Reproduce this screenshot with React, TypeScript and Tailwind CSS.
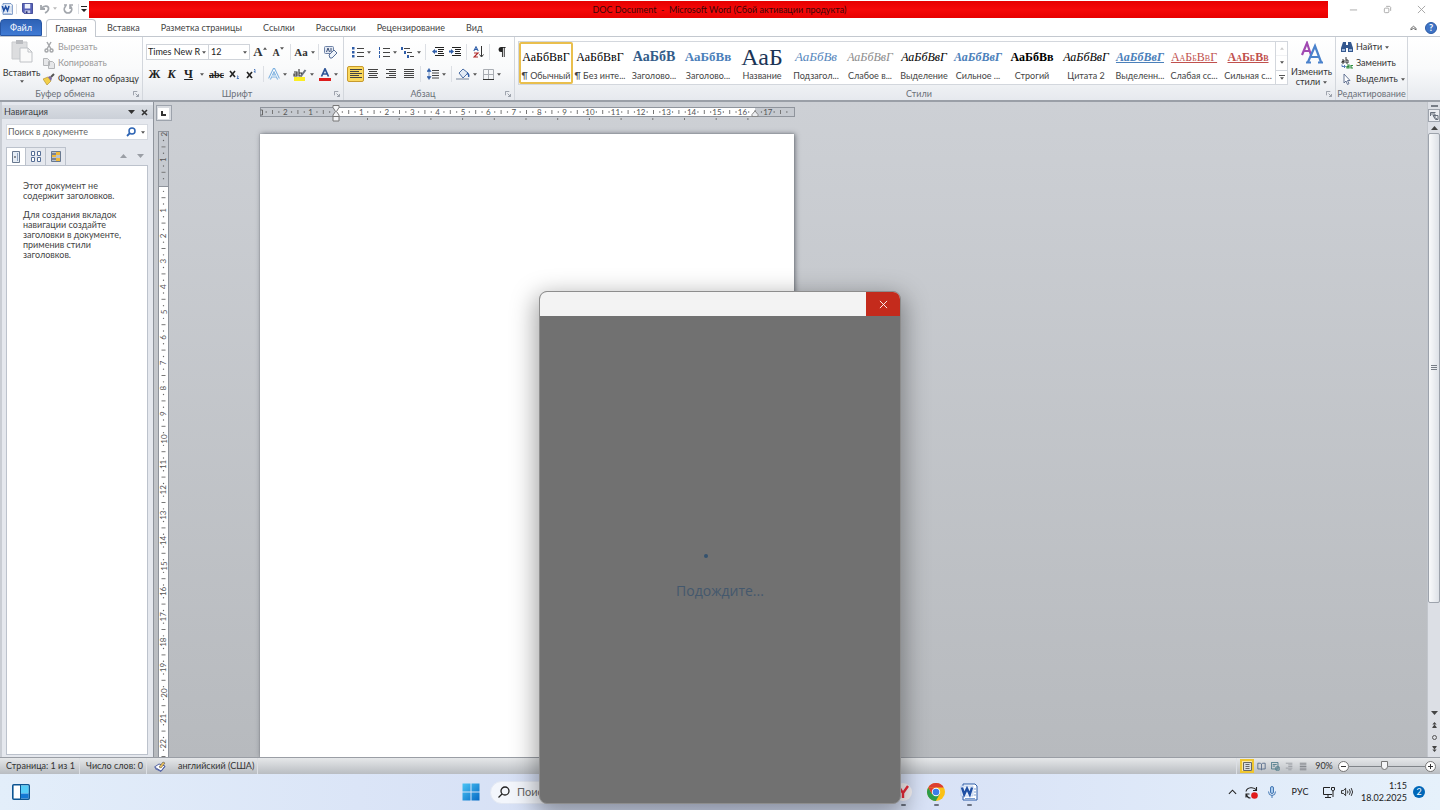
import React from "react";
import { clsx } from "clsx";

const UNIT = 25.4; // one centimetre on the rulers at 90% zoom

const Caret = ({ className = "" }: { className?: string }) => (
  <svg viewBox="0 0 5 3" className={clsx("w-[4px] h-[3px] shrink-0", className)} aria-hidden="true">
    <path d="M0 0h5L2.5 3z" fill="#555" />
  </svg>
);

const Divider = ({ className = "" }: { className?: string }) => (
  <span className={clsx("w-px h-4 bg-[#dcdfe4] shrink-0", className)} />
);

const Launcher = () => (
  <button type="button" aria-label="Параметры" className="w-3 h-3 flex items-center justify-center shrink-0">
    <svg viewBox="0 0 7 7" className="w-[6px] h-[6px]" fill="none" stroke="#8a919b">
      <path d="M.5 5V.5H5M3 3l3 3M6.5 3.5v3h-3" />
    </svg>
  </button>
);

type ToolProps = {
  label: string;
  className?: string;
  caret?: boolean;
  children: React.ReactNode;
};

const Tool = ({ label, className = "", caret, children }: ToolProps) => (
  <button
    type="button"
    title={label}
    aria-label={label}
    className={clsx("h-4 flex items-center justify-center gap-[3px] shrink-0", className)}
  >
    {children}
    {caret && <Caret />}
  </button>
);

type GroupProps = {
  title: string;
  className?: string;
  launcher?: boolean;
  children: React.ReactNode;
};

const Group = ({ title, className = "", launcher = true, children }: GroupProps) => (
  <section className={clsx("flex flex-col border-r border-[#d3d7dd] shrink-0", className)}>
    <div className="flex-1 min-h-0">{children}</div>
    <div className="h-[13px] flex items-center">
      <h2 className="flex-1 text-center text-[#6a7078]">{title}</h2>
      {launcher && <Launcher />}
    </div>
  </section>
);

const WordIcon = ({ className }: { className: string }) => (
  <svg viewBox="0 0 18 18" className={className} aria-hidden="true">
    <path d="M3 1h12l2 2v14H3z" fill="#fff" stroke="#2b5aa5" />
    <path d="M14 6h2M14 9h2M14 12h2M5 15.500h10" stroke="#7c9ed2" />
    <path d="M1 3h12v10H1z" fill="#e8f0fb" stroke="#9fbbe4" strokeWidth=".6" />
    <path d="M2 4.500l2.200 7L7 5.500l2.800 6 2.200-7" fill="none" stroke="#1f4fa3" strokeWidth="2.400" />
  </svg>
);

const Lines = ({ rows }: { rows: number[][] }) => (
  <svg viewBox="0 0 12 10" className="w-3 h-[10px]" stroke="#444" aria-hidden="true">
    {rows.map(([a, b], i) => (
      <path key={i} d={`M${a} ${i * 2 + 0.5}H${b}`} />
    ))}
  </svg>
);

const TitleBar = () => (
  <header className="h-[19px] flex items-start bg-white">
    <div className="w-[89px] h-[17px] flex items-center pl-px shrink-0">
      <WordIcon className="w-3 h-3" />
      <Divider className="ml-[3px] h-[10px]" />
      <Tool label="Сохранить" className="w-[21px]">
        <svg viewBox="0 0 12 12" className="w-[11px] h-[11px]">
          <path d="M.5.5h11v11h-9l-2-2z" fill="#5661b8" stroke="#3c4594" />
          <path d="M3 1h6v5H3z" fill="#eef1fb" />
          <path d="M3 8h6v3H3z" fill="#c8cde8" />
          <path d="M4 9h2v2H4z" fill="#2d3470" />
        </svg>
      </Tool>
      <Tool label="Отменить" className="w-[20px]">
        <svg viewBox="0 0 10 10" className="w-[10px] h-[10px]" fill="none" stroke="#a3a7ad" strokeWidth="1.800">
          <path d="M1 1v4h4M1.500 4.500C4 1 9 1.500 8.500 5 8.300 7 7 8 5 9" />
        </svg>
        <Caret className="opacity-40" />
      </Tool>
      <Tool label="Повторить" className="w-[20px]">
        <svg viewBox="0 0 10 10" className="w-[10px] h-[10px]" fill="none" stroke="#a3a7ad" strokeWidth="1.600">
          <path d="M3 2C0 4 1 9 5 9s5-5 2-7M4 1h-3M7 5V1h3" />
        </svg>
      </Tool>
      <Divider className="h-[10px]" />
      <Tool label="Настройка панели" className="w-[10px]">
        <svg viewBox="0 0 6 6" className="w-[6px] h-[6px]">
          <path d="M0 0h6v1H0zM0 3h6L3 6z" fill="#222" />
        </svg>
      </Tool>
    </div>
    <h1 className="flex-1 h-[17px] mt-px pl-[22px] bg-linear-to-b from-[#e60000] via-[#f60808] to-[#e60000] text-center leading-[17px] text-[#3b0606] whitespace-pre">
      DOC Document  -  Microsoft Word (Сбой активации продукта)
    </h1>
    <div className="w-28 h-[19px] flex items-center pl-2 shrink-0">
      <Tool label="Свернуть" className="w-[34px]">
        <svg viewBox="0 0 10 10" className="w-[9px] h-[9px]" stroke="#a5a5a5" fill="none">
          <path d="M1 5.500h8" />
        </svg>
      </Tool>
      <Tool label="Восстановить" className="w-[34px]">
        <svg viewBox="0 0 10 10" className="w-[9px] h-[9px]" stroke="#a5a5a5" fill="none">
          <rect x="1.500" y="3.500" width="5" height="5" rx="1" />
          <path d="M3.500 1.500h4l1 1v4" />
        </svg>
      </Tool>
      <Tool label="Закрыть" className="w-[34px]">
        <svg viewBox="0 0 10 10" className="w-[9px] h-[9px]" stroke="#a0a0a0" fill="none">
          <path d="M1 1l8 8M9 1L1 9" />
        </svg>
      </Tool>
    </div>
  </header>
);

const tabs = ["Вставка", "Разметка страницы", "Ссылки", "Рассылки", "Рецензирование", "Вид"];

const Tabs = () => (
  <nav className="h-[18px] flex items-stretch bg-white border-b border-[#c3c8cf] shrink-0">
    <button type="button" className="w-[42px] bg-linear-to-b from-[#2e62b5] to-[#3f7ad4] border border-[#2756a5] rounded-t-sm text-white">
      Файл
    </button>
    <button type="button" className="w-[50px] ml-1 -mb-px bg-white border border-b-0 border-[#c3c8cf] rounded-t-sm text-[#444]">
      Главная
    </button>
    {tabs.map((tab) => (
      <button key={tab} type="button" className="ml-px px-[10px] text-[#444]">
        {tab}
      </button>
    ))}
    <div className="ml-auto flex items-center gap-2 pr-[3px]">
      <Tool label="Свернуть ленту">
        <svg viewBox="0 0 8 6" className="w-[7px] h-[6px]" fill="#fff" stroke="#555">
          <path d="M1 5V3.500L4 1l3 2.500V5L4 3.500z" />
        </svg>
      </Tool>
      <button
        type="button"
        aria-label="Справка"
        className="w-3 h-3 rounded-full bg-[#3f74c6] border border-[#2c5ba5] text-white font-bold leading-[10px]"
      >
        ?
      </button>
    </div>
  </nav>
);

const Clipboard = () => (
  <Group title="Буфер обмена" className="w-[143px]">
    <div className="flex pt-[2px]">
      <button type="button" className="w-[43px] flex flex-col items-center text-[#333]">
        <svg viewBox="0 0 22 24" className="w-[22px] h-6" aria-hidden="true">
          <path d="M1 3h15v17H1z" fill="#dcdddf" stroke="#c9cbce" />
          <path d="M5 1h7v4H5z" fill="#b9bbbf" />
          <path d="M9 9h8l4 4v10H9z" fill="#fafafa" stroke="#bfc2c6" />
          <path d="M17 9v4h4" fill="none" stroke="#bfc2c6" />
        </svg>
        <span className="mt-1 leading-3">Вставить</span>
        <Caret className="mt-px" />
      </button>
      <div className="flex flex-col items-start text-[#9a9a9a]">
        <button type="button" className="h-4 flex items-center gap-[3px]">
          <svg viewBox="0 0 12 12" className="w-3 h-3" fill="none" stroke="#a6a8ab" strokeWidth="1.500">
            <path d="M4 1l4 7M8 1L4 8" />
            <circle cx="3.500" cy="9.500" r="1.500" />
            <circle cx="8.500" cy="9.500" r="1.500" />
          </svg>
          Вырезать
        </button>
        <button type="button" className="h-4 flex items-center gap-[3px]">
          <svg viewBox="0 0 12 12" className="w-3 h-3" fill="#e6e7e9" stroke="#b4b6b9">
            <path d="M.5 1.500h4l2 2v5h-6zM5.500 4.500h4l2 2v5h-6z" />
          </svg>
          Копировать
        </button>
        <button type="button" className="h-4 flex items-center gap-[3px] text-[#333]">
          <svg viewBox="0 0 12 12" className="w-3 h-3 shrink-0">
            <path d="M0 6l5-2 3 4-4 4z" fill="#f2cf4a" stroke="#b08c22" strokeWidth=".6" />
            <path d="M5 4l2-1 2 2-1 3z" fill="#7b6a9c" />
            <path d="M8 4l3-3" stroke="#555" strokeWidth="2" />
          </svg>
          Формат по образцу
        </button>
      </div>
    </div>
  </Group>
);

const FontGroup = () => (
  <Group title="Шрифт" className="w-[201px]">
    <div className="flex items-center h-4 mt-[7px] pl-[3px]">
      <div className="relative w-[63px]">
        <select aria-label="Шрифт" className="block w-full h-4 pl-px pr-2 appearance-none bg-white border border-[#d0d4da] text-[#222]">
          <option>Times New Roman</option>
        </select>
        <Caret className="absolute right-[3px] top-[7px]" />
      </div>
      <div className="relative w-[42px] -ml-px">
        <select aria-label="Размер шрифта" className="block w-full h-4 pl-[2px] appearance-none bg-white border border-[#d0d4da] text-[#222]">
          <option>12</option>
        </select>
        <Caret className="absolute right-[3px] top-[7px]" />
      </div>
      <Tool label="Увеличить размер" className="w-[20px]">
        <span className="font-['Liberation_Serif'] font-bold text-[13px] text-[#333]">A</span>
        <Caret className="-ml-[3px] mb-2 rotate-180" />
      </Tool>
      <Tool label="Уменьшить размер" className="w-[16px]">
        <span className="font-['Liberation_Serif'] font-bold text-[10px] text-[#333]">A</span>
        <Caret className="-ml-[3px] mb-2" />
      </Tool>
      <Divider className="ml-1" />
      <Tool label="Регистр" className="w-[27px]" caret>
        <span className="font-['Liberation_Serif'] font-bold text-[11px] text-[#333]">Aa</span>
      </Tool>
      <Divider />
      <Tool label="Очистить формат" className="w-[24px]">
        <svg viewBox="0 0 14 13" className="w-[14px] h-[13px]">
          <rect x=".5" y=".5" width="9" height="7" rx="1" fill="#e3e9f3" stroke="#7084a8" />
          <path d="M2.500 6l1.500-4 1.500 4M7 2v4" fill="none" stroke="#3c5078" />
          <path d="M5 9l5-5 3 3-5 5H6z" fill="#eef3fa" stroke="#587099" />
        </svg>
      </Tool>
    </div>
    <div className="flex items-center h-4 mt-[6px] pl-[3px] font-['Liberation_Serif'] font-bold text-[12px] text-[#222]">
      <Tool label="Полужирный" className="w-[17px]">Ж</Tool>
      <Tool label="Курсив" className="w-[17px] italic">К</Tool>
      <Tool label="Подчёркнутый" className="w-[28px]" caret>
        <span className="underline mr-1">Ч</span>
      </Tool>
      <Tool label="Зачёркнутый" className="w-[17px] text-[10px] line-through">abc</Tool>
      <Tool label="Подстрочный" className="w-[17px]">
        <svg viewBox="0 0 10 10" className="w-[10px] h-[10px]" fill="none" stroke="#222">
          <path d="M1 2l5 6M6 2L1 8" strokeWidth="1.600" />
          <path d="M8 7h1v1l-1 1.500h2" stroke="#2d5fae" strokeWidth=".8" />
        </svg>
      </Tool>
      <Tool label="Надстрочный" className="w-[17px]">
        <svg viewBox="0 0 10 10" className="w-[10px] h-[10px]" fill="none" stroke="#222">
          <path d="M1 3l5 6M6 3L1 9" strokeWidth="1.600" />
          <path d="M8 .5h1v1L8 3h2" stroke="#2d5fae" strokeWidth=".8" />
        </svg>
      </Tool>
      <Divider className="ml-1" />
      <Tool label="Эффекты текста" className="w-[27px]" caret>
        <svg viewBox="0 0 12 12" className="w-3 h-3" fill="none">
          <path d="M1.500 11L6 1.500 10.500 11M3.500 8h5" stroke="#7fb2e0" strokeWidth="3" />
          <path d="M1.500 11L6 1.500 10.500 11M3.500 8h5" stroke="#fff" strokeWidth="1" />
        </svg>
      </Tool>
      <Tool label="Цвет выделения" className="w-[25px]" caret>
        <svg viewBox="0 0 14 13" className="w-[14px] h-[13px]">
          <path d="M1 9h11v4H1z" fill="#fbee23" />
          <path d="M1 4h3v4H1V6h3M6 1v7h2.500V5H6" fill="none" stroke="#333" strokeWidth="1.100" />
          <path d="M8 8l4.500-6" stroke="#6a727e" strokeWidth="2" />
        </svg>
      </Tool>
      <Tool label="Цвет текста" className="w-[25px]" caret>
        <svg viewBox="0 0 12 13" className="w-3 h-[13px]">
          <path d="M0 10h12v3H0z" fill="#dd1c1c" />
          <path d="M2.500 8.500L6 .8l3.500 7.700M4 6h4" fill="none" stroke="#2f5597" strokeWidth="1.700" />
        </svg>
      </Tool>
    </div>
  </Group>
);

const ListIcon = ({ numbered }: { numbered?: boolean }) => (
  <svg viewBox="0 0 12 11" className="w-3 h-[11px]" aria-hidden="true">
    <path d="M5 1.500h7M5 5.500h7M5 9.500h7" stroke="#444" />
    <path
      d={numbered ? "M1 0h1v3H1zM1 4h1v3H1zM1 8h1v3H1z" : "M0 0h2.500v2.500H0zM0 4h2.500v2.500H0zM0 8h2.500v2.500H0z"}
      fill="#2e5da8"
    />
  </svg>
);

const ParagraphGroup = () => (
  <Group title="Абзац" className="w-[171px]">
    <div className="flex items-center h-4 mt-[7px] pl-[3px]">
      <Tool label="Маркеры" className="w-[28px]" caret>
        <ListIcon />
      </Tool>
      <Tool label="Нумерация" className="w-[24px]" caret>
        <ListIcon numbered />
      </Tool>
      <Tool label="Многоуровневый список" className="w-6" caret>
        <svg viewBox="0 0 13 11" className="w-[13px] h-[11px]">
          <path d="M3 1.500h6M6 5.500h5M9 9.500h4" stroke="#444" />
          <path d="M0 0h2v3H0zM3 4h2v3H3zM6 8h2v3H6z" fill="#2e5da8" />
        </svg>
      </Tool>
      <Divider className="ml-[2px]" />
      <Tool label="Уменьшить отступ" className="w-5 pl-1">
        <svg viewBox="0 0 12 11" className="w-3 h-[11px]">
          <path d="M3 .5h9M6 2.500h6M6 4.500h5M6 6.500h6M3 8.500h9" stroke="#222" />
          <path d="M0 4.500L3 2v1.500h2v2H3V7z" fill="#2e5da8" />
        </svg>
      </Tool>
      <Tool label="Увеличить отступ" className="w-[18px]">
        <svg viewBox="0 0 12 11" className="w-3 h-[11px]">
          <path d="M3 .5h9M6 2.500h6M6 4.500h5M6 6.500h6M3 8.500h9" stroke="#222" />
          <path d="M5 4.500L2 2v1.500H0v2h2V7z" fill="#2e5da8" />
        </svg>
      </Tool>
      <Divider className="ml-[2px]" />
      <Tool label="Сортировка" className="w-[22px]">
        <svg viewBox="0 0 11 12" className="w-[11px] h-3" fill="none">
          <path d="M.8 5L3 .8 5.200 5M1.600 3.500h3" stroke="#2e5da8" strokeWidth="1.100" />
          <path d="M1 7h4l-4 4h4" stroke="#b02a2a" strokeWidth="1.200" />
          <path d="M8.500 0v10.500M6.500 8.500l2 2.500 2-2.500" stroke="#333" />
        </svg>
      </Tool>
      <Divider />
      <Tool label="Непечатаемые знаки" className="w-6">
        <svg viewBox="0 0 8 11" className="w-2 h-[10px]">
          <path d="M4.500 0v11M6.500 0v11M3 .5h5" stroke="#222" />
          <path d="M4.500 0H3a2.500 2.500 0 000 5.500h1.500z" fill="#222" />
        </svg>
      </Tool>
    </div>
    <div className="flex items-center h-4 mt-[6px] pl-[3px]">
      <Tool label="По левому краю" className="w-[17px] bg-[#fbd95f] border border-[#c79a2d] rounded-xs">
        <Lines rows={[[0, 12], [0, 9], [0, 12], [0, 9], [0, 12]]} />
      </Tool>
      <Tool label="По центру" className="w-[18px]">
        <Lines rows={[[1, 11], [2, 10], [1, 11], [2, 10], [1, 11]]} />
      </Tool>
      <Tool label="По правому краю" className="w-[18px]">
        <Lines rows={[[1, 11], [4, 11], [1, 11], [4, 11], [1, 11]]} />
      </Tool>
      <Tool label="По ширине" className="w-[18px]">
        <Lines rows={[[1, 11], [1, 11], [1, 11], [1, 11], [1, 11]]} />
      </Tool>
      <Divider className="ml-[2px]" />
      <Tool label="Интервал" className="w-[30px]" caret>
        <svg viewBox="0 0 12 12" className="w-3 h-3">
          <path d="M5 2.500h7M5 5h7M5 7.500h7M5 10h7" stroke="#444" />
          <path d="M2 3v6M0 3.500L2 .5l2 3zM0 8.500l2 3 2-3z" stroke="#2e5da8" strokeWidth=".6" fill="#2e5da8" />
        </svg>
      </Tool>
      <Divider />
      <Tool label="Заливка" className="w-[29px]" caret>
        <svg viewBox="0 0 14 12" className="w-[14px] h-3" fill="none">
          <path d="M3 5l4-4 5 4-5 5z" fill="#e3ebf5" stroke="#4d6fa5" />
          <path d="M11 5c2 1 2 3 1.500 4" stroke="#2e5da8" strokeWidth="1.500" />
          <path d="M0 11h13" stroke="#b4bcc8" strokeWidth="2" />
        </svg>
      </Tool>
      <Tool label="Границы" className="w-[22px]" caret>
        <svg viewBox="0 0 11 11" className="w-[11px] h-[11px]" fill="none">
          <path d="M.5 10V.5h10V10M5.500 1v9M1 5.500h9" stroke="#a9adb3" />
          <path d="M0 10.500h11" stroke="#333" />
        </svg>
      </Tool>
    </div>
  </Group>
);

const styles = [
  { name: "¶ Обычный", text: "АаБбВвГ", look: "text-[12px] text-black" },
  { name: "¶ Без инте...", text: "АаБбВвГ", look: "text-[12px] text-black" },
  { name: "Заголово...", text: "АаБбВ", look: "text-[14px] font-bold text-[#335c89]" },
  { name: "Заголово...", text: "АаБбВв", look: "text-[13px] font-bold text-[#4b80ba]" },
  { name: "Название", text: "АаБ", look: "text-[24px] text-[#1c3556]" },
  { name: "Подзагол...", text: "АаБбВв", look: "text-[13px] italic text-[#5687bd]" },
  { name: "Слабое в...", text: "АаБбВвГ", look: "text-[12px] italic text-[#8c8c8c]" },
  { name: "Выделение", text: "АаБбВвГ", look: "text-[12px] italic text-black" },
  { name: "Сильное ...", text: "АаБбВвГ", look: "text-[12px] font-bold italic text-[#4b80ba]" },
  { name: "Строгий", text: "АаБбВв", look: "text-[12px] font-bold text-black" },
  { name: "Цитата 2", text: "АаБбВвГ", look: "text-[12px] italic text-black" },
  { name: "Выделенн...", text: "АаБбВвГ", look: "text-[12px] font-bold italic underline text-[#4b80ba]" },
  { name: "Слабая сс...", text: "АаБбВвГ", look: "text-[12px] [font-variant:small-caps] underline text-[#c0504d]" },
  { name: "Сильная с...", text: "АаБбВв", look: "text-[12px] [font-variant:small-caps] font-bold underline text-[#c0504d]" },
];

const StylesGroup = () => (
  <Group title="Стили" className="w-[821px]">
    <div className="flex pt-1 pl-[3px]">
      <div className="flex h-11 bg-white border border-[#d3d7dd]">
        {styles.map((style, i) => (
          <button
            key={i}
            type="button"
            className={clsx(
              "w-[54px] h-[42px] flex flex-col items-center",
              i === 0 ? "border-2 border-[#e9bf4d] rounded-xs" : "p-[2px]"
            )}
          >
            <span className={clsx("h-[26px] flex items-center justify-center font-['Liberation_Serif'] leading-[26px]", style.look)}>
              {style.text}
            </span>
            <span className="leading-[11px] text-[#444]">{style.name}</span>
          </button>
        ))}
        <div className="w-[12px] flex flex-col border-l border-[#d3d7dd] divide-y divide-[#d3d7dd]">
          <button type="button" aria-label="Вверх" className="flex-1 flex items-center justify-center opacity-30">
            <Caret className="rotate-180" />
          </button>
          <button type="button" aria-label="Вниз" className="flex-1 flex items-center justify-center">
            <Caret />
          </button>
          <button type="button" aria-label="Дополнительно" className="flex-1 flex flex-col items-center justify-center gap-px">
            <span className="w-[6px] h-px bg-[#555]" />
            <Caret />
          </button>
        </div>
      </div>
      <button type="button" className="flex-1 flex flex-col items-center text-[#333] leading-[10px]">
        <svg viewBox="0 0 24 24" className="w-6 h-6 mb-[2px]" fill="none" aria-hidden="true">
          <path d="M2 14L7 2l4 12M4 10h6" stroke="#a149b2" strokeWidth="2.200" />
          <path d="M8 21l7-16 6 16M11 16h8M6 21.500h5M18 21.500h5" stroke="#4a82cc" strokeWidth="2.200" />
        </svg>
        <span>Изменить</span>
        <span className="flex items-center gap-[3px]">
          стили <Caret />
        </span>
      </button>
    </div>
  </Group>
);

const EditingGroup = () => (
  <Group title="Редактирование" className="w-[72px]" launcher={false}>
    <div className="flex flex-col items-start pt-[2px] pl-[5px] text-[#333]">
      <button type="button" className="h-4 flex items-center gap-[3px]">
        <svg viewBox="0 0 12 12" className="w-3 h-3">
          <path d="M2 1h3v3h2V1h3l2 6v4H7V7H5v4H0V7z" fill="#34588f" />
          <path d="M1 8h3v2H1zM8 8h3v2H8z" fill="#9cb6da" />
        </svg>
        Найти <Caret />
      </button>
      <button type="button" className="h-4 flex items-center gap-[3px]">
        <svg viewBox="0 0 12 12" className="w-3 h-3" fill="none">
          <path d="M1 3h2v3H1V4.500h2M5 0v6h2V3H5" stroke="#333" />
          <path d="M1 7.500v2h3M3 8l1.500 1.500L3 11" stroke="#2e5da8" strokeWidth=".8" />
          <path d="M6 8h2v3H6V9.500h2M12 8.500h-2V11h2" stroke="#2c8c3c" strokeWidth="1.200" />
        </svg>
        Заменить
      </button>
      <button type="button" className="h-4 flex items-center gap-[3px]">
        <svg viewBox="0 0 12 12" className="w-3 h-3">
          <path d="M3 1v9l2-2 1.500 3.500 1.500-.8L6.500 7.500H9z" fill="#fff" stroke="#56688a" strokeWidth=".9" />
        </svg>
        Выделить <Caret />
      </button>
    </div>
  </Group>
);

const NavigationPane = () => (
  <aside className="w-[154px] flex flex-col bg-[#e5e8ee] border-l-2 border-r border-[#8f949c] border-l-[#c9cdd4] shrink-0">
    <div className="h-[14px] mt-[3px] flex items-center pl-[2px] pr-[5px] bg-linear-to-b from-[#d9dde3] to-[#cbd0d8] text-[#3c3f45]">
      <h2 className="flex-1">Навигация</h2>
      <button type="button" aria-label="Меню панели" className="mr-[6px]">
        <svg viewBox="0 0 7 4" className="w-[7px] h-1">
          <path d="M0 0h7L3.500 4z" fill="#333" />
        </svg>
      </button>
      <button type="button" aria-label="Закрыть панель">
        <svg viewBox="0 0 7 7" className="w-[7px] h-[7px]" stroke="#333" strokeWidth="1.600">
          <path d="M1 1l5 5M6 1L1 6" />
        </svg>
      </button>
    </div>
    <label className="h-4 mt-[5px] ml-1 mr-[5px] flex items-center bg-white border border-[#d5d9e0]">
      <input
        aria-label="Поиск в документе"
        placeholder="Поиск в документе"
        className="flex-1 min-w-0 pl-px outline-none placeholder:text-[#666]"
      />
      <svg viewBox="0 0 10 10" className="w-[10px] h-[10px]" fill="none" stroke="#2d64b4">
        <circle cx="6" cy="4" r="3" strokeWidth="1.500" />
        <path d="M4 6L1 9" strokeWidth="1.800" />
      </svg>
      <Caret className="ml-[5px] mr-[2px]" />
    </label>
    <div className="h-[18px] mt-[7px] ml-1 mr-[5px] flex items-stretch">
      <button type="button" aria-label="Заголовки" className="w-[20px] -mb-px flex items-center justify-center bg-white border border-b-0 border-[#bcc2cc]">
        <svg viewBox="0 0 8 12" className="w-2 h-3">
          <path d="M.5.500h7v11h-7z" fill="#e6ecf4" stroke="#68788f" />
          <path d="M5.500 2v8" stroke="#8fa3bf" />
          <path d="M2 6h2" stroke="#333" />
        </svg>
      </button>
      <button type="button" aria-label="Страницы" className="w-[20px] flex items-center justify-center border-t border-r border-[#bcc2cc]">
        <svg viewBox="0 0 10 11" className="w-[10px] h-[11px]" fill="#fff" stroke="#566f96">
          <path d="M.5.500h3v4h-3zM6.500.500h3v4h-3zM.5 6.500h3v4h-3zM6.500 6.500h3v4h-3z" />
        </svg>
      </button>
      <button type="button" aria-label="Результаты" className="w-[20px] flex items-center justify-center border-t border-r border-[#bcc2cc]">
        <svg viewBox="0 0 10 11" className="w-[10px] h-[11px]">
          <path d="M.5.500h9v10h-9z" fill="#b8c2d0" stroke="#68788f" />
          <path d="M5 1h4v3H5zM1 4h4v2H1zM5 7h4v3H5z" fill="#efb93a" />
          <path d="M1 3h4M1 8h4" stroke="#445" />
        </svg>
      </button>
      <div className="ml-auto mr-1 flex items-center gap-[10px]">
        <button type="button" aria-label="Предыдущий">
          <svg viewBox="0 0 7 4" className="w-[7px] h-1">
            <path d="M0 4h7L3.500 0z" fill="#9a9ea5" />
          </svg>
        </button>
        <button type="button" aria-label="Следующий">
          <svg viewBox="0 0 7 4" className="w-[7px] h-1">
            <path d="M0 0h7L3.500 4z" fill="#9a9ea5" />
          </svg>
        </button>
      </div>
    </div>
    <div className="flex-1 ml-1 mr-[5px] mb-[2px] pt-[15px] px-4 bg-white border border-[#bcc2cc] leading-[10px] text-[#444] whitespace-normal">
      <p className="w-[100px]">Этот документ не содержит заголовков.</p>
      <p className="w-[100px] mt-[9px]">
        Для создания вкладок навигации создайте заголовки в документе, применив стили заголовков.
      </p>
    </div>
  </aside>
);

type RulerProps = { from: number; to: number; zero: number; centre: number; vertical?: boolean };

// Labels on whole centimetres, a tick on each half, a dot on each quarter
const RulerMarks = ({ from, to, zero, centre, vertical }: RulerProps) => {
  const marks = [];
  for (let q = from * 4; q <= to * 4; q++) {
    if (q === 0) continue;
    const pos = zero + (q * UNIT) / 4;
    const x = vertical ? centre : pos;
    const y = vertical ? pos : centre;
    if (q % 4 === 0) {
      marks.push(
        <text
          key={q}
          x={x}
          y={y + 3}
          textAnchor="middle"
          fontSize="8"
          fill="#555"
          transform={vertical ? `rotate(-90 ${x} ${y})` : undefined}
        >
          {Math.abs(q / 4)}
        </text>
      );
    } else if (q % 2 === 0) {
      marks.push(
        <path key={q} d={vertical ? `M${x - 2} ${y}h4` : `M${x} ${y - 2}v4`} stroke="#777" />
      );
    } else {
      marks.push(<circle key={q} cx={x} cy={y} r=".7" fill="#666" />);
    }
  }
  return <>{marks}</>;
};

const HorizontalRuler = () => (
  <svg viewBox="0 0 537 18" className="block w-[537px] h-[18px]" aria-hidden="true">
    <rect x=".5" y="3.500" width="534" height="9" fill="#c6cad0" stroke="#8f949c" />
    <rect x="76" y="4" width="419" height="8" fill="#fff" />
    <RulerMarks from={-2.75} to={17.75} zero={76} centre={8} />
    <path d="M.5 6h2v5h-2" fill="none" stroke="#666" />
    {Array.from({ length: 13 }, (_, i) => (
      <path key={i} d={`M${107.500 + i * 31.700} 14v2`} stroke="#777" />
    ))}
    <path d="M73 1.500h6v2L76.500 7.500 79 11v6h-6v-6l2.500-3.500L73 3.500zM73 12.500h6" fill="#f3f4f6" stroke="#777" />
    <path d="M492 12.500v-2l3-3.500 3 3.500v2z" fill="#eceef1" stroke="#888" />
  </svg>
);

const VerticalRuler = () => (
  <svg className="block w-3 flex-1 min-h-0" aria-hidden="true">
    <rect x=".5" y=".5" width="10" height="100%" fill="#fff" stroke="#8f949c" />
    <rect x="1" y="1" width="9" height="54" fill="#c6cad0" />
    <path d="M1 55.500h9" stroke="#8f949c" />
    <RulerMarks from={-2} to={22.5} zero={54} centre={5.500} vertical />
  </svg>
);

const ScrollBar = () => (
  <div className="w-[13px] flex flex-col items-center bg-[#dcdfe5] border-l border-[#c2c6cc] shrink-0">
    <span className="w-[7px] h-[2px] mt-[3px] bg-[#777d86]" />
    <button type="button" aria-label="Линейка" className="w-3 h-[13px] mt-[2px] flex items-center justify-center border border-[#9da3ac] bg-[#eceef2]">
      <svg viewBox="0 0 9 9" className="w-[9px] h-[9px]" fill="none" stroke="#68707c">
        <path d="M.5 5V1.500h5M1 3h4v3M3 4.500h5v4H5.500zM4 6l3 2" />
      </svg>
    </button>
    <button type="button" aria-label="Прокрутить вверх" className="h-[11px] flex items-center">
      <svg viewBox="0 0 7 4" className="w-[7px] h-1">
        <path d="M0 4h7L3.500 0z" fill="#444" />
      </svg>
    </button>
    <div className="flex-1 w-full flex flex-col">
      <div className="basis-[82%] flex flex-col items-center justify-center gap-px bg-linear-to-r from-[#f9fafb] to-[#dde1e7] border border-[#9da3ac] rounded-xs">
        <span className="w-[6px] h-px bg-[#777d86]" />
        <span className="w-[6px] h-px bg-[#777d86]" />
        <span className="w-[6px] h-px bg-[#777d86]" />
      </div>
    </div>
    <button type="button" aria-label="Прокрутить вниз" className="h-[13px] flex items-center">
      <svg viewBox="0 0 7 4" className="w-[7px] h-1">
        <path d="M0 0h7L3.500 4z" fill="#444" />
      </svg>
    </button>
    <button type="button" aria-label="Предыдущая страница" className="h-3 flex items-center">
      <svg viewBox="0 0 5 7" className="w-[5px] h-[6px]" fill="#444">
        <path d="M0 3h5L2.500 0zM0 6h5L2.500 3zM0 6h5v1H0z" />
      </svg>
    </button>
    <button type="button" aria-label="Выбор объекта перехода" className="h-3 flex items-center">
      <span className="w-[5px] h-[5px] border border-[#555] rounded-full" />
    </button>
    <button type="button" aria-label="Следующая страница" className="h-3 mb-[2px] flex items-center">
      <svg viewBox="0 0 5 7" className="w-[5px] h-[6px]" fill="#444">
        <path d="M0 1h5L2.500 4zM0 4h5L2.500 7zM0 0h5v1H0z" />
      </svg>
    </button>
  </div>
);

const Workspace = () => (
  <main className="flex-1 min-h-0 flex bg-linear-to-b from-[#cdd0d5] to-[#b7babe]">
    <NavigationPane />
    <div className="w-[19px] flex flex-col items-center shrink-0">
      <button type="button" aria-label="Тип табуляции" className="w-4 h-4 mt-[3px] mb-[10px] flex items-center justify-center bg-[#d8dbe0] border border-[#9da3ac] shrink-0">
        <span className="w-[11px] h-[11px] flex items-center justify-center bg-white">
          <span className="w-[5px] h-[5px] border-l-2 border-b-2 border-[#333]" />
        </span>
      </button>
      <VerticalRuler />
    </div>
    <div className="flex-1 min-w-0 flex flex-col pl-[87px] overflow-hidden">
      <div className="h-8 pt-[2px] shrink-0">
        <HorizontalRuler />
      </div>
      <article className="flex-1 w-[534px] bg-white shadow-[0_0_1px_#777b82,1px_0_5px_rgba(60,65,75,0.7)]" />
    </div>
    <ScrollBar />
  </main>
);

const viewModes = [
  { label: "Чтение", art: "M1 1.500h3l1.500 1L7 1.500h3v7H7L5.500 9.500 4 8.500H1zM5.500 2.500v7", tone: "text-[#4d6384]" },
  { label: "Веб-документ", art: "M.5.500h8v8h-8zM2 3h5M2 5h3M6 6h4v4H6z", tone: "text-[#3d7080]" },
  { label: "Структура", art: "M1 1.500h8M4 3.500h5M4 5.500h5M1 7.500h8M4 9.500h4", tone: "text-[#95999f]" },
  { label: "Черновик", art: "M1 1.500h8M1 3.500h8M1 5.500h8M1 7.500h8M1 9.500h8", tone: "text-[#777b81]" },
];

const StatusBar = () => (
  <footer className="h-[17px] flex items-center bg-linear-to-b from-[#e6e8ea] to-[#b9bdc2] border-t border-[#9a9ea5] text-[#333] shrink-0">
    <span className="w-[79px] pl-[6px]">Страница: 1 из 1</span>
    <Divider className="h-3 bg-[#a6aab0]" />
    <span className="w-[66px] pl-[6px]">Число слов: 0</span>
    <Divider className="h-3 bg-[#a6aab0]" />
    <Tool label="Правописание" className="w-[25px]">
      <svg viewBox="0 0 12 11" className="w-3 h-[11px]">
        <path d="M.5 6L5 3l6 2-4 5z" fill="#fff" stroke="#5263a5" />
        <path d="M1 7.500l6 3 4-5" fill="none" stroke="#5263a5" />
        <path d="M5 6l4-5 2 1-4 5z" fill="#f0c35a" stroke="#555" strokeWidth=".6" />
      </svg>
    </Tool>
    <span className="w-[85px] pl-[6px]">английский (США)</span>
    <Divider className="h-3 bg-[#a6aab0]" />
    <div className="ml-auto flex items-center">
      <Divider className="h-3 mr-[3px] bg-[#a6aab0]" />
      <Tool label="Разметка страницы" className="w-[14px] h-[14px] bg-[#fbe9a5] border-2 border-[#efc62f]">
        <svg viewBox="0 0 9 9" className="w-[9px] h-[9px]" fill="#d9dce0" stroke="#666">
          <path d="M.5.500h8v8h-8zM2.500 2.500h4M2.500 4.500h4M2.500 6.500h4" />
        </svg>
      </Tool>
      {viewModes.map((mode) => (
        <Tool key={mode.label} label={mode.label} className={clsx("w-[14px]", mode.tone)}>
          <svg viewBox="0 0 11 11" className="w-[9px] h-[9px]" fill="none" stroke="currentColor">
            <path d={mode.art} />
          </svg>
        </Tool>
      ))}
      <span className="w-[28px] text-center">90%</span>
      <button type="button" aria-label="Уменьшить" className="w-[11px] h-[11px] flex items-center justify-center bg-white border border-[#777] rounded-full">
        <span className="w-[5px] h-px bg-[#333]" />
      </button>
      <input
        type="range"
        aria-label="Масштаб"
        defaultValue={46}
        className="w-[76px] h-3 appearance-none bg-transparent [&::-webkit-slider-runnable-track]:h-px [&::-webkit-slider-runnable-track]:bg-[#808489] [&::-webkit-slider-thumb]:appearance-none [&::-webkit-slider-thumb]:w-[7px] [&::-webkit-slider-thumb]:h-[9px] [&::-webkit-slider-thumb]:-mt-[5px] [&::-webkit-slider-thumb]:bg-[#f4f5f7] [&::-webkit-slider-thumb]:border [&::-webkit-slider-thumb]:border-[#777] [&::-webkit-slider-thumb]:rounded-b-sm"
      />
      <button type="button" aria-label="Увеличить" className="w-[11px] h-[11px] mr-1 flex items-center justify-center bg-white border border-[#777] rounded-full">
        <svg viewBox="0 0 5 5" className="w-[5px] h-[5px]" stroke="#333">
          <path d="M0 2.500h5M2.500 0v5" />
        </svg>
      </button>
    </div>
  </footer>
);

const RunningApp = ({ label, children }: { label: string; children: React.ReactNode }) => (
  <button type="button" aria-label={label} className="w-[18px] flex flex-col items-center gap-[3px] pt-1">
    {children}
    <span className="w-[5px] h-[2px] rounded-full bg-[#6b7280]" />
  </button>
);

const TaskBar = () => (
  <footer className="h-9 grid grid-cols-[1fr_auto_1fr] items-center bg-linear-to-r from-[#e3eefa] via-[#d3dcf4] to-[#e6f1fb] shrink-0">
    <button type="button" aria-label="Виджеты" className="w-[18px] ml-3">
      <svg viewBox="0 0 18 16" className="w-[18px] h-4">
        <rect x=".8" y=".8" width="16.400" height="14.400" rx="1" fill="#fff" stroke="#0d5592" strokeWidth="1.600" />
        <path d="M9 1.500h7.500v8H9z" fill="#55cdf8" />
        <path d="M9 9.500h7.500v5H9z" fill="#1378d4" />
        <path d="M8.500 1v14" stroke="#0d5592" />
      </svg>
    </button>
    <div className="w-[516px] flex items-center">
      <button type="button" aria-label="Пуск" className="w-[18px]">
        <svg viewBox="0 0 18 18" className="w-[18px] h-[18px]">
          <defs>
            <linearGradient id="win" x1="0" y1="0" x2="1" y2="1">
              <stop offset="0" stopColor="#4cc5f5" />
              <stop offset="1" stopColor="#0669c4" />
            </linearGradient>
          </defs>
          <path d="M.5.500h8v8h-8zM9.500.500h8v8h-8zM.5 9.500h8v8h-8zM9.500 9.500h8v8h-8z" fill="url(#win)" />
        </svg>
      </button>
      <label className="w-[165px] h-[23px] ml-[10px] pl-[7px] flex items-center gap-[7px] bg-[#f3f6fc] border border-[#e3e8f3] rounded-full">
        <svg viewBox="0 0 12 12" className="w-3 h-3" fill="none" stroke="#222" strokeWidth="1.300">
          <circle cx="7" cy="5" r="4" />
          <path d="M4 8l-3.500 3.500" />
        </svg>
        <input aria-label="Поиск" placeholder="Поиск" className="w-20 text-[11px] outline-none placeholder:text-[#666]" />
      </label>
      <div className="ml-auto flex gap-[15px]">
        <RunningApp label="Yandex">
          <svg viewBox="0 0 18 18" className="w-[18px] h-[18px]">
            <circle cx="9" cy="9" r="9" fill="#f8f4f6" />
            <path d="M5 4l4 6v5M14 3L9 10" fill="none" stroke="#ef2b3a" strokeWidth="2.400" />
          </svg>
        </RunningApp>
        <RunningApp label="Chrome">
          <svg viewBox="0 0 18 18" className="w-[18px] h-[18px]">
            <circle cx="9" cy="9" r="9" fill="#fbc116" />
            <path d="M1.200 4.500A9 9 0 0116.800 4.500H9z" fill="#dc3e33" />
            <path d="M1.200 4.500A9 9 0 008.800 18l4-7L9 9 5 11z" fill="#2c9d4c" />
            <path d="M1.200 4.500L5 11l4-6.500z" fill="#dc3e33" />
            <circle cx="9" cy="9" r="4.200" fill="#fff" />
            <circle cx="9" cy="9" r="3.300" fill="#3b7de8" />
          </svg>
        </RunningApp>
        <RunningApp label="Word">
          <WordIcon className="w-[18px] h-[18px]" />
        </RunningApp>
      </div>
    </div>
    <div className="flex items-center justify-end pr-[15px] text-[#222]">
      <Tool label="Скрытые значки" className="w-[18px]">
        <svg viewBox="0 0 10 6" className="w-[9px] h-[6px]" fill="none" stroke="#222" strokeWidth="1.200">
          <path d="M1 5l4-4 4 4" />
        </svg>
      </Tool>
      <Tool label="Обновление" className="w-5">
        <svg viewBox="0 0 13 13" className="w-[13px] h-[13px]" fill="none" stroke="#222" strokeWidth="1.100">
          <path d="M1 5.500C2 1 9 .5 11.500 4M11.500 1v3.500H8M1 11.500V8h3.500M1.500 8.500C2 10.500 3.500 12 5.500 12" />
          <circle cx="9.500" cy="9.500" r="3.300" fill="#e01b1b" stroke="none" />
        </svg>
      </Tool>
      <Tool label="Микрофон" className="w-[21px]">
        <svg viewBox="0 0 10 12" className="w-[10px] h-3" fill="none" stroke="#4478b4">
          <rect x="3.500" y=".5" width="3" height="7" rx="1.500" fill="#a9cbee" />
          <path d="M1.500 5.500a3.500 4 0 007 0M5 9.500V12" />
        </svg>
      </Tool>
      <span className="w-9 text-center">РУС</span>
      <Tool label="Сеть" className="w-[21px]">
        <svg viewBox="0 0 13 12" className="w-[13px] h-3" fill="none" stroke="#222">
          <path d="M8 1.500H1.500v7h8.500M3 11.500h6M6 8.500v3M9.500 1.500h3V4l-1.500 1-1.500-1zM11 5v6" />
        </svg>
      </Tool>
      <Tool label="Громкость" className="w-[17px]">
        <svg viewBox="0 0 14 10" className="w-[13px] h-[10px]" fill="none" stroke="#222">
          <path d="M.5 3.500h2L5 1v8L2.500 6.500h-2zM7 3.500q1 1.500 0 3M9 2q2 3 0 6M11 .8q3 4.200 0 8.400" />
        </svg>
      </Tool>
      <time className="w-[51px] leading-3 text-right">
        1:15
        <br />
        18.02.2025
      </time>
      <span className="w-3 h-3 ml-[6px] rounded-full bg-[#0067b8] text-center leading-3 text-white">2</span>
    </div>
  </footer>
);

const ActivationDialog = () => (
  <div
    role="dialog"
    aria-label="Подождите"
    className="absolute left-1/2 -translate-x-1/2 top-[291px] bottom-[6px] w-[362px] flex flex-col bg-[#717171] border border-[#8d8d8d] rounded-lg overflow-hidden shadow-[0_8px_24px_4px_rgba(0,0,0,0.35)]"
  >
    <div className="h-6 flex justify-end bg-[#f3f3f3] shrink-0">
      <button type="button" aria-label="Закрыть" className="w-[34px] flex items-center justify-center bg-[#c42b1c]">
        <svg viewBox="0 0 10 10" className="w-[9px] h-[9px]" stroke="#fff">
          <path d="M1 1l8 8M9 1L1 9" />
        </svg>
      </button>
    </div>
    <div className="flex-1 flex flex-col items-center justify-center pt-9">
      <span className="w-1 h-1 mr-7 rounded-full bg-[#34526e]" />
      <p className="mt-[23px] text-[14px] leading-5 text-[#44586d] font-['Open_Sans','Noto_Sans',sans-serif]">Подождите...</p>
    </div>
  </div>
);

export default function App() {
  return (
    <div className="relative h-screen flex flex-col overflow-hidden bg-white font-[Lato,'Noto_Sans',sans-serif] text-[9px] whitespace-nowrap">
      <TitleBar />
      <Tabs />
      <div className="h-[65px] flex bg-linear-to-b from-white via-[#f9fafb] to-[#e6e9ee] border-b-2 border-[#9a9fa7] shrink-0">
        <Clipboard />
        <FontGroup />
        <ParagraphGroup />
        <StylesGroup />
        <EditingGroup />
      </div>
      <Workspace />
      <StatusBar />
      <TaskBar />
      <ActivationDialog />
    </div>
  );
}
